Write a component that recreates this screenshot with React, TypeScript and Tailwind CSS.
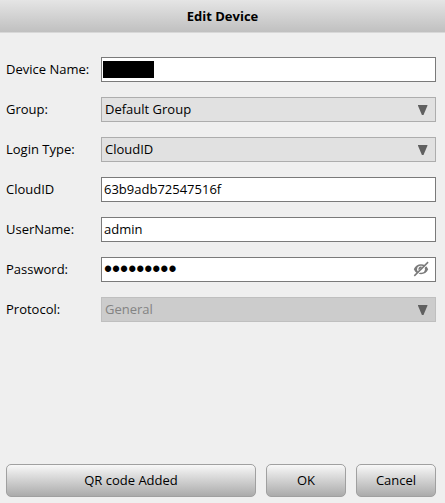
import { useState } from "react";
import type { ReactNode } from "react";

const inputClass =
  "block h-[25px] w-full border border-[#7a7a7a] bg-white px-[2px] pb-[2px] text-[13px] leading-5 text-black outline-none";

const buttonClass =
  "h-[33px] rounded-[5px] border border-[#a0a0a0] bg-linear-to-b from-[#f8f8f8] to-[#ababab] pb-[2px] text-[13px] leading-5 text-black";

function Field({ id, label, children }: { id: string; label: string; children: ReactNode }) {
  return (
    <div className="flex items-center">
      <label htmlFor={id} className="w-[95px] shrink-0 pb-[2px] text-[13px] leading-5">
        {label}
      </label>
      <div className="relative min-w-0 flex-1">{children}</div>
    </div>
  );
}

function SelectBox({ id, options, disabled }: { id: string; options: string[]; disabled?: boolean }) {
  return (
    <>
      <select
        id={id}
        disabled={disabled}
        className="block h-[25px] w-full appearance-none border border-[#adadad] bg-[#e1e1e1] px-[3px] pb-[2px] text-[13px] leading-5 text-black opacity-100 outline-none disabled:border-[#bfbfbf] disabled:bg-[#cccccc] disabled:text-[#838383]"
      >
        {options.map((option) => (
          <option key={option}>{option}</option>
        ))}
      </select>
      <svg
        viewBox="0 0 10 10"
        className="pointer-events-none absolute top-2 right-[8px] size-[10px] fill-[#606060]"
        aria-hidden="true"
      >
        <path d="M0 0h9.400v.8L5.500 10H3.900L0 .8z" />
      </svg>
    </>
  );
}

function EyeOffIcon() {
  return (
    <svg viewBox="0 0 16 16" className="size-4" fill="none" aria-hidden="true">
      <path
        d="M.8 8.300C2.300 4.800 4.800 3.200 8 3.200s5.700 1.600 7.200 5.100c-1.500 3.300-4 4.900-7.200 4.900S2.300 11.600.8 8.300z"
        fill="#7a7a7a"
      />
      <ellipse cx="8" cy="8.200" rx="3.900" ry="3.500" fill="#fff" />
      <path d="M8 5.600a2.500 2.500 0 0 0-2.300 3.700l3.500-3.400A2.500 2.500 0 0 0 8 5.600z" fill="#7a7a7a" />
      <path d="M2.300 15.300 15.500 2.100" stroke="#fff" strokeWidth="1.300" />
      <path d="M1.300 14.900 15.100 1.100" stroke="#7a7a7a" strokeWidth="1.500" />
    </svg>
  );
}

export default function App() {
  const [showPassword, setShowPassword] = useState(false);

  return (
    <form
      className="flex min-h-screen flex-col bg-[#efefef] font-['Open_Sans','Noto_Sans',sans-serif] text-black"
      onSubmit={(e) => e.preventDefault()}
    >
      <header className="flex h-[33px] items-center justify-center border-b border-[#d8d8d8] bg-linear-to-b from-[#e5e5e5] to-[#c0c0c0]">
        <h1 className="text-[13px] leading-5 font-bold">Edit Device</h1>
      </header>

      <div className="flex flex-1 flex-col gap-[15px] pt-6 pr-[9px] pl-[6px]">
        <Field id="device-name" label="Device Name:">
          <input id="device-name" type="text" className={inputClass} />
          <span className="pointer-events-none absolute top-1 left-[2px] h-[17px] w-[51px] bg-black" />
        </Field>
        <Field id="group" label="Group:">
          <SelectBox id="group" options={["Default Group"]} />
        </Field>
        <Field id="login-type" label="Login Type:">
          <SelectBox id="login-type" options={["CloudID"]} />
        </Field>
        <Field id="cloud-id" label="CloudID">
          <input id="cloud-id" type="text" defaultValue="63b9adb72547516f" className={inputClass} />
        </Field>
        <Field id="username" label="UserName:">
          <input id="username" type="text" defaultValue="admin" className={inputClass} />
        </Field>
        <Field id="password" label="Password:">
          <input
            id="password"
            type={showPassword ? "text" : "password"}
            defaultValue="admin1234"
            className="block h-[25px] w-full border border-[#7a7a7a] bg-white pr-8 pl-[2px] font-['Liberation_Sans',sans-serif] text-[23px] leading-5 text-black outline-none"
          />
          <button
            type="button"
            aria-label="Toggle password visibility"
            className="absolute top-1 right-[7px]"
            onClick={() => setShowPassword(!showPassword)}
          >
            <EyeOffIcon />
          </button>
        </Field>
        <Field id="protocol" label="Protocol:">
          <SelectBox id="protocol" options={["General"]} disabled />
        </Field>
      </div>

      <footer className="flex gap-[10px] pr-[9px] pb-[6px] pl-[6px]">
        <button type="button" className={`${buttonClass} flex-1`}>
          QR code Added
        </button>
        <button type="submit" className={`${buttonClass} w-20`}>
          OK
        </button>
        <button type="button" className={`${buttonClass} w-20`}>
          Cancel
        </button>
      </footer>
    </form>
  );
}
